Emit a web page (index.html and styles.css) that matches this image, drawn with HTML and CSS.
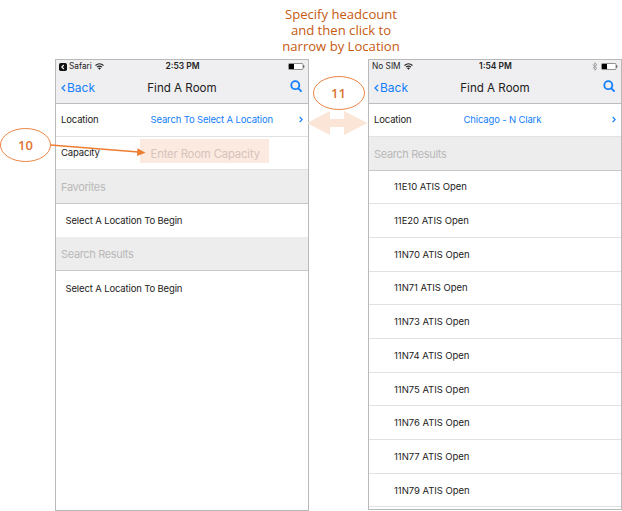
FILE: index.html
```html
<!DOCTYPE html>
<html lang="en">
<head>
<meta charset="utf-8">
<title>Find A Room</title>
<link rel="stylesheet" href="styles.css">
</head>
<body>
<main class="guide">
  <p class="caption">Specify headcount<br>and then click to<br>narrow by Location</p>
  <div class="phones">
    <section class="phone phone-left">
      <header class="top">
        <div class="status">
          <div class="carrier">
            <svg width="8" height="8" viewBox="0 0 8 8"><rect width="8" height="8" rx="1.8" fill="#111"/><path d="M4.8 2 2.8 4l2 2" fill="none" stroke="#fff" stroke-width="1.1"/></svg>
            <span class="network safari">Safari</span>
            <svg class="wifi" width="9" height="7" viewBox="0 0 9 7"><path d="M.5 2.5Q4.5-1 8.5 2.5M2 4.2Q4.5 2 7 4.2" fill="none" stroke="#222" stroke-width="1.1"/><path d="M3 5.2Q4.5 4 6 5.2L4.500 6.8Z" fill="#222"/></svg>
          </div>
          <time>2:53 PM</time>
          <div class="power"><svg width="17" height="7" viewBox="0 0 17 7"><rect x=".5" y=".5" width="14.500" height="6" rx=".8" fill="#fff" stroke="#777" stroke-width=".8"/><path d="M1 1h5v5H1z" fill="#000"/><path d="M15.800 2.500v2" stroke="#333"/></svg></div>
        </div>
        <div class="nav">
          <span class="back"><svg width="5" height="8" viewBox="0 0 5 8"><path d="M4.100 1 1 4l3.100 3"/></svg>Back</span>
          <h1>Find A Room</h1>
          <svg class="search" width="13" height="13" viewBox="0 0 13 13"><circle cx="5.300" cy="5.200" r="4"/><path d="m8.100 8.100 3.500 3.500"/></svg>
        </div>
      </header>
      <div class="row field"><span class="label">Location</span><span class="value">Search To Select A Location</span><svg class="chevron" width="4" height="7" viewBox="0 0 4 7"><path d="M.7.9 3.100 3.500.7 6.100"/></svg></div>
      <div class="row field capacity"><span class="label">Capacity</span><span class="entry">Enter Room Capacity</span></div>
      <div class="row section">Favorites</div>
      <div class="row item plain">Select A Location To Begin</div>
      <div class="row section">Search Results</div>
      <div class="row item plain">Select A Location To Begin</div>
    </section>
    <section class="phone phone-right">
      <header class="top">
        <div class="status">
          <div class="carrier">
            <span class="network sim">No SIM</span>
            <svg class="wifi" width="9" height="7" viewBox="0 0 9 7"><path d="M.5 2.5Q4.5-1 8.5 2.5M2 4.2Q4.5 2 7 4.2" fill="none" stroke="#222" stroke-width="1.1"/><path d="M3 5.2Q4.5 4 6 5.2L4.500 6.8Z" fill="#222"/></svg>
          </div>
          <time>1:54 PM</time>
          <div class="power"><svg width="6" height="9" viewBox="0 0 6 9"><path d="m.6 2.500 4.300 3.800L2.800 8.200V.8l2.100 1.900L.6 6.500" fill="none" stroke="#999" stroke-width=".9"/></svg><svg width="17" height="7" viewBox="0 0 17 7"><rect x=".5" y=".5" width="14.500" height="6" rx=".8" fill="#fff" stroke="#777" stroke-width=".8"/><path d="M1 1h5v5H1z" fill="#000"/><path d="M15.800 2.500v2" stroke="#333"/></svg></div>
        </div>
        <div class="nav">
          <span class="back"><svg width="5" height="8" viewBox="0 0 5 8"><path d="M4.100 1 1 4l3.100 3"/></svg>Back</span>
          <h1>Find A Room</h1>
          <svg class="search" width="13" height="13" viewBox="0 0 13 13"><circle cx="5.300" cy="5.200" r="4"/><path d="m8.100 8.100 3.500 3.500"/></svg>
        </div>
      </header>
      <div class="row field"><span class="label">Location</span><span class="value">Chicago - N Clark</span><svg class="chevron" width="4" height="7" viewBox="0 0 4 7"><path d="M.7.9 3.100 3.500.7 6.100"/></svg></div>
      <div class="row section">Search Results</div>
      <div class="row item">11E10 ATIS Open</div>
      <div class="row item">11E20 ATIS Open</div>
      <div class="row item">11N70 ATIS Open</div>
      <div class="row item">11N71 ATIS Open</div>
      <div class="row item">11N73 ATIS Open</div>
      <div class="row item">11N74 ATIS Open</div>
      <div class="row item">11N75 ATIS Open</div>
      <div class="row item">11N76 ATIS Open</div>
      <div class="row item">11N77 ATIS Open</div>
      <div class="row item">11N79 ATIS Open</div>
    </section>
  </div>
  <svg class="callouts" width="622" height="511" viewBox="0 0 622 511">
    <path class="span-arrow" d="m307 123 23-12v8h14v-8l23.500 12L344 135v-8h-14v8z"/>
    <path class="pointer" d="m50.500 145 88 7"/>
    <path class="pointer-head" d="m137.500 148.200 8 4.500-8.500 3.300z"/>
    <ellipse class="bubble" cx="25.500" cy="145" rx="25" ry="16.500"/>
    <ellipse class="bubble" cx="339" cy="93" rx="25.500" ry="16.500"/>
    <text class="number" x="25.500" y="150">10</text>
    <text class="number" x="338.500" y="98">11</text>
  </svg>
</main>
</body>
</html>
```

FILE: styles.css
```css
* { box-sizing: border-box; }

body {
  margin: 0;
  background: #fff;
  color: #222;
  font: 9.500px/14px Inter, "Liberation Sans", sans-serif;
}

.guide {
  position: relative;
  width: 622px;
  height: 511px;
  overflow: hidden;
}

.caption {
  margin: 0 0 0 241px;
  padding-top: 6px;
  width: 200px;
  height: 59px;
  color: #c55a11;
  font: 13.100px/16px "Open Sans", sans-serif;
  text-align: center;
  white-space: nowrap;
}

.phones {
  display: flex;
  align-items: flex-start;
  gap: 59px;
  padding-left: 55px;
}

.phone {
  flex: none;
  width: 254px;
  height: 452px;
  border: 1px solid #b9b9b9;
  overflow: hidden;
}

.phone-right { height: 451px; }

.top {
  height: 43.600px;
  background: #efeff1;
  border-bottom: 1px solid #bdbdbf;
}

.status {
  display: grid;
  grid-template-columns: 1fr auto 1fr;
  align-items: center;
  height: 13px;
  padding: 0 3px;
  font-size: 8.300px;
  line-height: 13px;
}

.status time {
  margin-left: 1px;
  font-size: 8.500px;
  font-weight: 600;
}

.carrier, .power { display: flex; align-items: center; }

.power { justify-content: flex-end; gap: 3px; }

.wifi { margin-left: 3px; }

.safari { margin-left: 2px; }

.nav {
  display: grid;
  grid-template-columns: 1fr auto 1fr;
  align-items: center;
  height: 29px;
  padding: 0 5px;
}

.nav h1 {
  margin: 0;
  font-size: 11.600px;
  font-weight: 400;
  line-height: 18px;
}

.back {
  display: flex;
  align-items: center;
  gap: 1px;
  color: #137efb;
  font-size: 12px;
  line-height: 18px;
}

.back path, .chevron path, .search {
  fill: none;
  stroke: #137efb;
  stroke-width: 1.200;
}

.search {
  justify-self: end;
  margin-bottom: 2px;
  stroke-width: 1.800;
}

.row {
  display: flex;
  align-items: center;
  height: 33.700px;
  padding-top: 1px;
  border-bottom: 1px solid #e2e2e2;
  white-space: nowrap;
}

.field {
  height: 33.300px;
  padding: 0 5px;
  letter-spacing: -.15px;
}

.label { width: 89.500px; }

.value { color: #137efb; }

.chevron { margin-left: auto; }

.entry {
  width: 129px;
  height: 24px;
  margin: -5px 0 0 -10.500px;
  padding: 5px 0 0 10.500px;
  background: #fce9df;
  color: #d6c3bc;
  font-size: 11.300px;
  line-height: 20px;
}

.section {
  padding-left: 5px;
  background: #ededed;
  border-bottom-color: #c8c8c8;
  color: #b9b9b9;
  font-size: 11px;
  letter-spacing: -.35px;
}

.item { padding-left: 25px; letter-spacing: -.04px; }

.plain {
  padding-left: 9.500px;
  border-bottom-color: #ededed;
  letter-spacing: -.14px;
}

.plain:last-child { border-bottom: 0; }

.callouts { position: absolute; top: 0; left: 0; }

.span-arrow { fill: #fbe5d6; }

.pointer { fill: none; stroke: #ed7d31; stroke-width: 1.700; }

.pointer-head { fill: #ed7d31; }

.bubble { fill: #fff; stroke: #ed8545; stroke-width: 1; }

.number {
  fill: #dd7434;
  font: 600 13px "Open Sans", sans-serif;
  text-anchor: middle;
}
```
